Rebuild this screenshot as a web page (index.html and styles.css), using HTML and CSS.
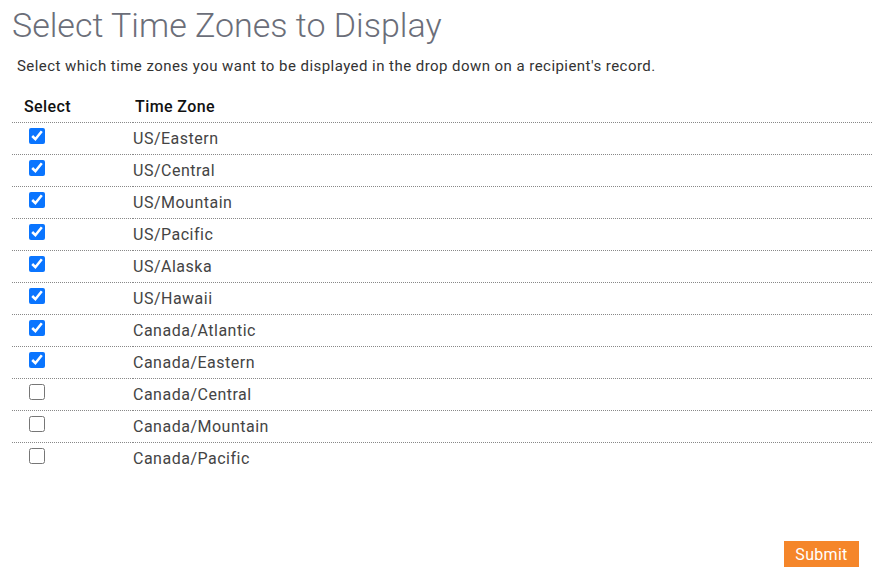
FILE: index.html
```html
<!DOCTYPE html>
<html lang="en">
<head>
    <meta charset="UTF-8">
    <title>Select Time Zones to Display</title>
    <link rel="stylesheet" href="styles.css">
</head>
<body>
    <div class="page">
        <h1 class="title">Select Time Zones to Display</h1>
        <p class="intro">Select which time zones you want to be displayed in the drop down on a recipient's record.</p>
        <form class="tz-form">
            <table class="tz-table">
                <tr>
                    <th class="col-select">Select</th>
                    <th class="col-zone">Time Zone</th>
                </tr>
                <tr><td class="col-select"><input type="checkbox" checked></td><td class="col-zone">US/Eastern</td></tr>
                <tr><td class="col-select"><input type="checkbox" checked></td><td class="col-zone">US/Central</td></tr>
                <tr><td class="col-select"><input type="checkbox" checked></td><td class="col-zone">US/Mountain</td></tr>
                <tr><td class="col-select"><input type="checkbox" checked></td><td class="col-zone">US/Pacific</td></tr>
                <tr><td class="col-select"><input type="checkbox" checked></td><td class="col-zone">US/Alaska</td></tr>
                <tr><td class="col-select"><input type="checkbox" checked></td><td class="col-zone">US/Hawaii</td></tr>
                <tr><td class="col-select"><input type="checkbox" checked></td><td class="col-zone">Canada/Atlantic</td></tr>
                <tr><td class="col-select"><input type="checkbox" checked></td><td class="col-zone">Canada/Eastern</td></tr>
                <tr><td class="col-select"><input type="checkbox"></td><td class="col-zone">Canada/Central</td></tr>
                <tr><td class="col-select"><input type="checkbox"></td><td class="col-zone">Canada/Mountain</td></tr>
                <tr><td class="col-select"><input type="checkbox"></td><td class="col-zone">Canada/Pacific</td></tr>
            </table>
            <div class="actions">
                <button type="submit" class="submit">Submit</button>
            </div>
        </form>
    </div>
</body>
</html>
```

FILE: styles.css
```css
* {
    padding: 0;
    margin: 0;
    box-sizing: border-box;
}
body {
    background-color: #ffffff;
    font-family: "Roboto", "Liberation Sans", sans-serif;
    color: #333333;
}
.page {
    padding: 4px 1px 0 12px;
}
.title {
    font-size: 34px;
    font-weight: 300;
    color: #6b6e79;
    line-height: 42px;
}
.intro {
    font-size: 15px;
    letter-spacing: 0.45px;
    color: #333333;
    margin: 11px 0 0 5px;
    line-height: 18px;
}
.tz-table {
    width: 100%;
    border-collapse: collapse;
    margin-top: 15px;
}
.tz-table th {
    font-weight: 500;
    font-size: 16px;
    letter-spacing: 0.4px;
    color: #111111;
    text-align: left;
    height: 32px;
    padding-top: 1px;
    border-bottom: 1px dotted #888888;
}
.tz-table td {
    height: 32px;
    font-size: 16px;
    letter-spacing: 0.5px;
    color: #444444;
    border-bottom: 1px dotted #888888;
    vertical-align: middle;
}
.tz-table tr:last-child td {
    border-bottom: none;
}
.tz-table th.col-select {
    width: 121px;
    padding-left: 12px;
}
.tz-table th.col-zone {
    padding-left: 2px;
}
.tz-table td.col-select {
    padding-left: 17px;
}
.tz-table td.col-select input {
    width: 16px;
    height: 16px;
    margin: 0;
    display: block;
    position: relative;
    top: -2px;
    accent-color: #0a75ff;
}
.actions {
    display: flex;
    justify-content: flex-end;
    padding-right: 13px;
    margin-top: 67px;
}
.submit {
    background-color: #f5862a;
    color: #ffffff;
    border: none;
    font-family: "Roboto", "Liberation Sans", sans-serif;
    font-size: 16px;
    letter-spacing: 0.3px;
    width: 75px;
    height: 26px;
}
```
